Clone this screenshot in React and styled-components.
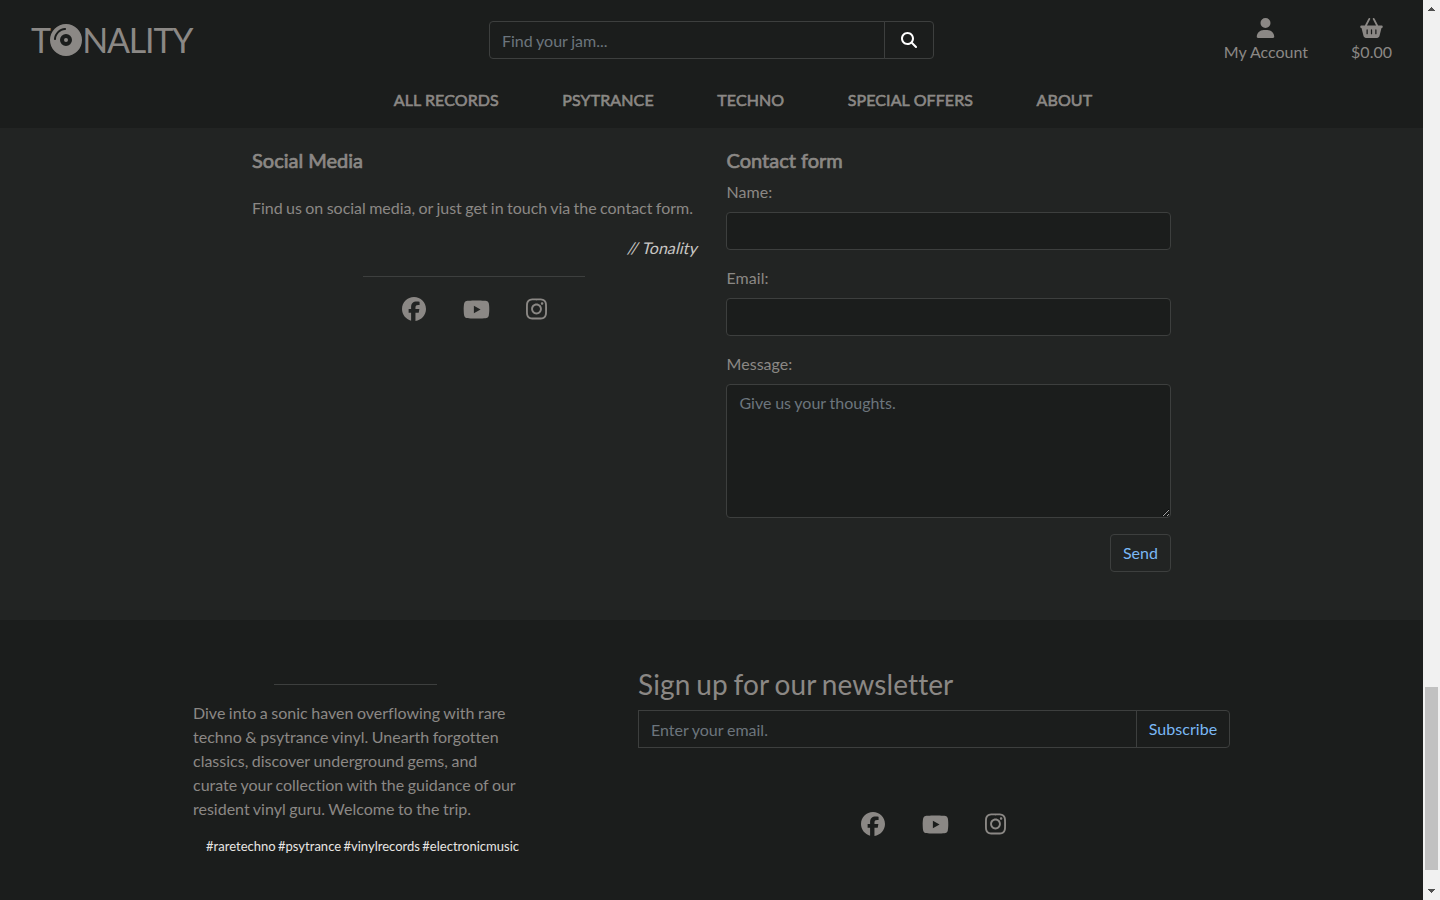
import React from "react";
import styled, { createGlobalStyle } from "styled-components";
import {
  FaBasketShopping,
  FaCompactDisc,
  FaFacebook,
  FaInstagram,
  FaMagnifyingGlass,
  FaUser,
  FaYoutube,
} from "react-icons/fa6";

const dark = "#1b1d1c";
const panel = "#222423";
const line = "#3d3f3e";
const muted = "#8b8885";
const link = "#7ab8f5";

const GlobalStyle = createGlobalStyle`
  *, *::before, *::after { box-sizing: border-box; }
  html, body { margin: 0; height: 100%; overflow: hidden; }
  body {
    background: ${dark};
    color: ${muted};
    font: 400 16px/24px Lato, "Liberation Sans", sans-serif;
    font-variant-ligatures: none;
  }
  h2, h5, p { margin: 0; font-weight: 400; }
  svg { display: block; }
`;

const Window = styled.div`
  display: flex;
  width: 1440px;
  height: 900px;
  overflow: hidden;
`;

const Page = styled.div`
  display: flex;
  flex-direction: column;
  width: 1423px;
  flex: none;
`;

const Header = styled.header`
  height: 128px;
  flex: none;
  background: ${dark};
`;

const TopBar = styled.div`
  display: grid;
  grid-template-columns: 489px 445px 1fr;
  height: 80px;
  padding-top: 21px;
`;

const Logo = styled.div`
  display: flex;
  align-items: center;
  height: 38px;
  padding-left: 31px;
  font-size: 34px;
  line-height: 36px;
  letter-spacing: -0.85px;
  span { padding-bottom: 1px; }
  span:last-child { letter-spacing: -1.2px; }
`;

const InputGroup = styled.form`
  display: flex;
  height: 38px;
`;

const Field = styled.input`
  display: block;
  width: 100%;
  min-width: 0;
  height: 38px;
  padding: ${(p) => (p.$joined ? "2px 12px" : "6px 12.5px")};
  background: ${dark};
  border: 1px solid ${line};
  border-radius: ${(p) => p.$radius || "4px"};
  color: ${muted};
  font: inherit;
  word-spacing: -0.4px;
  outline: none;
  &::placeholder { color: #6c757d; opacity: 1; }
`;

const TextArea = styled(Field).attrs({ as: "textarea" })`
  height: 134px;
  resize: vertical;
`;

const Button = styled.button`
  flex: none;
  display: flex;
  align-items: center;
  justify-content: center;
  height: 38px;
  width: ${(p) => p.$width}px;
  margin-left: ${(p) => (p.$joined ? "-1px" : 0)};
  padding: 0;
  background: transparent;
  border: 1px solid ${line};
  border-radius: ${(p) => (p.$joined ? "0 4px 4px 0" : "4px")};
  color: ${(p) => p.$color || link};
  font: inherit;
  letter-spacing: 0.05px;
`;

const Account = styled.div`
  display: flex;
  justify-content: flex-end;
  gap: 43px;
  padding-right: 31px;
  margin-top: -3px;
`;

const AccountLink = styled.a`
  display: flex;
  flex-direction: column;
  align-items: center;
  height: 46px;
  span { line-height: 24px; }
  svg { height: 21px; margin-bottom: 2px; }
`;

const Nav = styled.nav`
  display: flex;
  justify-content: center;
  gap: 63.5px;
  padding: 8px 0 0 63px;
  letter-spacing: 0.1px;
`;

const NavLink = styled.a`
  -webkit-text-stroke: 0.6px ${muted};
`;

const Contact = styled.main`
  display: grid;
  grid-template-columns: 446px 445px;
  column-gap: 28px;
  height: 492px;
  padding: 20px 0 0 252px;
  background: ${panel};
`;

const Heading = styled.h5`
  padding-left: ${(p) => p.$indent || 0};
  font-size: 20px;
  line-height: 24px;
  -webkit-text-stroke: 0.7px ${muted};
`;

const Intro = styled.p`
  margin-top: 24px;
  white-space: nowrap;
  word-spacing: -0.75px;
`;

const Signature = styled.p`
  margin-top: 16px;
  text-align: right;
  color: #c8c6c4;
  span {
    display: inline-block;
    letter-spacing: 0.06px;
    transform: skewX(-14deg);
  }
`;

const Rule = styled.div`
  width: ${(p) => p.$width}px;
  height: 1px;
  margin: ${(p) => p.$margin};
  background: ${line};
`;

const SocialRow = styled.div`
  display: flex;
  align-items: center;
  justify-content: center;
  gap: 36.5px;
  height: 24px;
  margin-top: ${(p) => p.$top}px;
  padding-right: 1px;
`;

const Instagram = styled(FaInstagram)`
  width: 21px;
  height: 24px;
`;

const Label = styled.label`
  display: block;
  margin: ${(p) => p.$top}px 0 8px;
  padding-left: 0.5px;
  letter-spacing: 0.05px;
`;

const Actions = styled.div`
  display: flex;
  justify-content: flex-end;
  margin-top: 16px;
`;

const Footer = styled.footer`
  display: grid;
  grid-template-columns: 326px 592px;
  column-gap: 119px;
  height: 280px;
  padding: 64px 0 0 193px;
  background: ${dark};
`;

const Blurb = styled.p`
  width: 330px;
  margin-top: 16px;
  word-spacing: -0.55px;
`;

const Tags = styled.p`
  margin-top: 15px;
  text-align: right;
  font-size: 13px;
  line-height: 20px;
  letter-spacing: 0.01px;
  word-spacing: -1px;
  white-space: nowrap;
  color: #e8e6e3;
`;

const NewsTitle = styled.h2`
  margin: -17px 0 8px;
  font-size: 28px;
  line-height: 35px;
  letter-spacing: 0.1px;
  word-spacing: -1.4px;
`;

const Scrollbar = styled.div`
  display: flex;
  flex-direction: column;
  align-items: center;
  width: 17px;
  height: 900px;
  padding: 7px 0;
  background: #f1f1f1;
`;

const Thumb = styled.div`
  width: 13px;
  height: 183px;
  margin: 676px 0 auto;
  background: #c1c1c1;
`;

const Arrow = ({ down }) => (
  <svg width="7" height="4" viewBox="0 0 7 4" shapeRendering="crispEdges">
    <path d={down ? "M0 0H7L3.5 4Z" : "M0 4H7L3.5 0Z"} fill="#505050" />
  </svg>
);

const Socials = ({ top }) => (
  <SocialRow $top={top}>
    <FaFacebook size={24} />
    <FaYoutube size={27} />
    <Instagram />
  </SocialRow>
);

const navItems = ["ALL RECORDS", "PSYTRANCE", "TECHNO", "SPECIAL OFFERS", "ABOUT"];

export default function App() {
  return (
    <Window>
      <GlobalStyle />
      <Page>
        <Header>
          <TopBar>
            <Logo>
              <span>T</span>
              <FaCompactDisc size={32} />
              <span>NALITY</span>
            </Logo>
            <InputGroup>
              <Field $joined $radius="4px 0 0 4px" placeholder="Find your jam..." />
              <Button $joined type="button" $width={50} $color="#fff" aria-label="Search">
                <FaMagnifyingGlass size={16} />
              </Button>
            </InputGroup>
            <Account>
              <AccountLink>
                <FaUser size={21} />
                <span>My Account</span>
              </AccountLink>
              <AccountLink>
                <FaBasketShopping size={23} />
                <span>$0.00</span>
              </AccountLink>
            </Account>
          </TopBar>
          <Nav>
            {navItems.map((item) => (
              <NavLink key={item}>{item}</NavLink>
            ))}
          </Nav>
        </Header>
        <Contact>
          <section>
            <Heading>Social Media</Heading>
            <Intro>Find us on social media, or just get in touch via the contact form.</Intro>
            <Signature>
              <span>// Tonality</span>
            </Signature>
            <Rule $width={222} $margin="16px auto 0 111px" />
            <Socials top={20} />
          </section>
          <form>
            <Heading $indent="0.5px">Contact form</Heading>
            <Label $top={8}>Name:</Label>
            <Field />
            <Label $top={16}>Email:</Label>
            <Field />
            <Label $top={16}>Message:</Label>
            <TextArea placeholder="Give us your thoughts." />
            <Actions>
              <Button type="button" $width={61}>Send</Button>
            </Actions>
          </form>
        </Contact>
        <Footer>
          <section>
            <Rule $width={163} $margin="0 0 0 81px" />
            <Blurb>
              Dive into a sonic haven overflowing with rare techno &amp; psytrance vinyl. Unearth
              forgotten classics, discover underground gems, and curate your collection with the
              guidance of our resident vinyl guru. Welcome to the trip.
            </Blurb>
            <Tags>#raretechno #psytrance #vinylrecords #electronicmusic</Tags>
          </section>
          <section>
            <NewsTitle>Sign up for our newsletter</NewsTitle>
            <InputGroup>
              <Field $joined $radius="0" placeholder="Enter your email." />
              <Button $joined type="button" $width={94}>Subscribe</Button>
            </InputGroup>
            <Socials top={64} />
          </section>
        </Footer>
      </Page>
      <Scrollbar>
        <Arrow />
        <Thumb />
        <Arrow down />
      </Scrollbar>
    </Window>
  );
}
